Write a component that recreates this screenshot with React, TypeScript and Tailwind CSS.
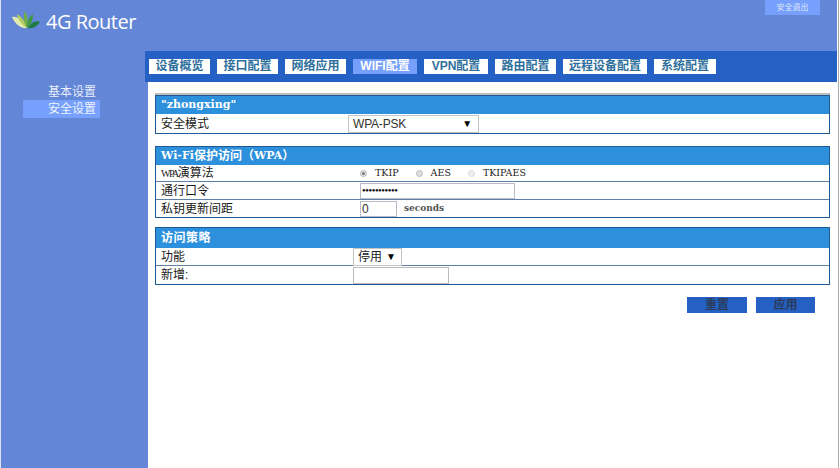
const cjk = "font-['Liberation_Sans','Noto_Sans_CJK_SC',sans-serif]";
const serif = "font-['DejaVu_Serif','Noto_Sans_CJK_SC',serif]";

const tabs = [
  { label: "设备概览", w: "w-[61px]" },
  { label: "接口配置", w: "w-[61px]" },
  { label: "网络应用", w: "w-[61px]" },
  { label: "WIFI配置", w: "w-[64px]", active: true },
  { label: "VPN配置", w: "w-[64px]" },
  { label: "路由配置", w: "w-[61px]" },
  { label: "远程设备配置", w: "w-[84px]" },
  { label: "系统配置", w: "w-[62px]" },
];

const Logo = () => (
  <svg width="28" height="18" viewBox="0 0 28 18" className="shrink-0">
    <path d="M0 6 C5 5 11 9 15 17 C9 18 3 13 0 6Z" fill="#e3ebb0" />
    <path d="M5 3 C9 5 13 10 15 17 C10 14 6 9 5 3Z" fill="#b4cd5c" />
    <path d="M13 0 C16 5 16 11 15 17 C12 12 11 6 13 0Z" fill="#6fae42" />
    <path d="M21 3 C21 9 19 14 15 17 C15 11 17 6 21 3Z" fill="#3f9a3a" />
    <path d="M28 11 C24 9 19 12 16 17 C21 18 25 15 28 11Z" fill="#1f7a45" />
  </svg>
);

const PanelHead = ({ children, h }: { children: React.ReactNode; h: string }) => (
  <div className={`${h} bg-[#2d90dc] flex items-center pl-[5px] text-[12px] font-bold text-white ${serif}`}>
    {children}
  </div>
);

const Row = ({ label, labelW, h, children, last }: { label: React.ReactNode; labelW: string; h: string; children?: React.ReactNode; last?: boolean }) => (
  <div className={`${h} flex items-center pl-[5px] ${last ? "" : "border-b border-[#5f80a8]"}`}>
    <div className={`${labelW} shrink-0 text-[12px] text-[#1a1a1a] ${cjk}`}>{label}</div>
    {children}
  </div>
);

const Radio = ({ label, shade, dot }: { label: string; shade: string; dot: string }) => (
  <div className="flex items-center">
    <span className={`w-[7px] h-[7px] rounded-full border ${shade} flex items-center justify-center`}>
      <span className={`w-[3px] h-[3px] rounded-full ${dot}`} />
    </span>
    <span className={`ml-[8px] text-[9.5px] text-[#222] ${serif}`}>{label}</span>
  </div>
);

const App = () => {
  return (
    <div className={`w-[840px] h-[468px] overflow-hidden flex bg-white ${cjk}`}>
      <div className="w-[1px] bg-[#dbe3f5] shrink-0" />
      <div className="w-[836px] shrink-0 flex flex-col bg-[#6386d6]">
        <div className="h-[51px] flex justify-between shrink-0">
          <div className="flex items-start pl-[11px] pt-[11px] gap-[6px]">
            <Logo />
            <span className="text-[20px] leading-[21px] text-white font-['Open_Sans',sans-serif] tracking-[-0.5px]">4G Router</span>
          </div>
          <div className="w-[55px] h-[15px] mr-[17px] bg-[#76a0fb] flex items-center justify-center text-[8px] text-[#dfe8fb]">
            安全退出
          </div>
        </div>

        <div className="flex-1 flex">
          <div className="w-[144px] shrink-0 pl-[22px] pt-[33px]">
            <div className="w-[77px] h-[16px] flex items-center pl-[25px] text-[12px] whitespace-nowrap text-[#e8eefb]">基本设置</div>
            <div className="w-[77px] h-[18px] flex items-center pl-[25px] text-[12px] whitespace-nowrap text-[#eef3fd] bg-[#76a0fb]">安全设置</div>
          </div>

          <div className="flex-1 flex flex-col">
            <div className="h-[31px] bg-[#2561c4] flex items-center pl-[4px] pb-[1px] gap-[7px] shrink-0">
              {tabs.map((t) => (
                <div
                  key={t.label}
                  className={`${t.w} h-[15px] flex items-center justify-center text-[12px] font-bold ${
                    t.active ? "bg-[#76a0fb] text-white" : "bg-white text-[#2f6f9c]"
                  }`}
                >
                  {t.label}
                </div>
              ))}
            </div>

            <div className="flex-1 ml-[3px] bg-white pl-[7px] pr-[7px] pt-[11px] flex flex-col">
              <div className="h-[3px] bg-[#bdbdbd] -mb-[1px]" />

              <div className="border border-[#1f5a96] h-[39px]">
                <PanelHead h="h-[18px]"><span className="text-[11px]">"zhongxing"</span></PanelHead>
                <Row label="安全模式" labelW="w-[187px]" h="h-[19px]" last>
                  <div className="w-[131px] h-[18px] border border-[#c4c4c4] flex items-center justify-between pl-[4px] pr-[6px] text-[12px] tracking-[-0.2px] text-[#333]">
                    <span>WPA-PSK</span>
                    <span className="text-[10px] text-black">▼</span>
                  </div>
                </Row>
              </div>

              <div className="mt-[12px] border border-[#1f5a96]">
                <PanelHead h="h-[18px]">
                  <span className="text-[11px]">Wi-Fi</span>
                  <span>保护访问（</span>
                  <span className="text-[11px]">WPA</span>
                  <span>）</span>
                </PanelHead>
                <Row
                  label={
                    <>
                      <span className="font-['Liberation_Serif',serif] text-[10px] tracking-[-1.5px]">WPA</span>演算法
                    </>
                  }
                  labelW="w-[199px]"
                  h="h-[17px]"
                >
                  <div className="flex items-center gap-[17px]">
                    <Radio label="TKIP" shade="border-[#b5b5b5] bg-[#e8e8e8]" dot="bg-[#777]" />
                    <Radio label="AES" shade="border-[#bbb] bg-[#ddd]" dot="bg-transparent" />
                    <Radio label="TKIPAES" shade="border-[#ddd] bg-[#eee]" dot="bg-transparent" />
                  </div>
                </Row>
                <Row label="通行口令" labelW="w-[199px]" h="h-[18px]">
                  <div className="w-[155px] h-[16px] border border-[#bbbbc8] flex items-center pl-[1px] text-[6px] tracking-[-0.4px] text-[#111]">
                    ●●●●●●●●●●●
                  </div>
                </Row>
                <Row label="私钥更新间距" labelW="w-[199px]" h="h-[17px]" last>
                  <div className="w-[37px] h-[16px] border border-[#bbbbc8] flex items-center pl-[1px] text-[12px] text-[#333]">0</div>
                  <span className={`ml-[7px] text-[9px] font-bold text-[#555] ${serif}`}>seconds</span>
                </Row>
              </div>

              <div className="mt-[9px] border border-[#1f5a96]">
                <PanelHead h="h-[20px]"><span className="tracking-[0.5px]">访问策略</span></PanelHead>
                <Row label="功能" labelW="w-[192px]" h="h-[18px]">
                  <div className="w-[49px] h-[18px] border border-[#c4c4c4] flex items-center justify-between pl-[4px] pr-[5px] text-[12px] text-[#222]">
                    <span>停用</span>
                    <span className="text-[10px] text-black">▼</span>
                  </div>
                </Row>
                <Row label="新增:" labelW="w-[192px]" h="h-[18px]" last>
                  <div className="w-[96px] h-[17px] border border-[#bbbbbb]" />
                </Row>
              </div>

              <div className="mt-[12px] flex justify-end gap-[9px] pr-[15px]">
                <div className="w-[60px] h-[16px] bg-[#2561c4] flex items-center justify-center text-[12px] font-bold text-[#2a3a5a]">重置</div>
                <div className="w-[59px] h-[16px] bg-[#2561c4] flex items-center justify-center text-[12px] font-bold text-[#2a3a5a]">应用</div>
              </div>
            </div>
          </div>
        </div>
      </div>
      <div className="w-[1px] bg-white shrink-0" />
      <div className="w-[1px] bg-[#aaaaaa] shrink-0" />
    </div>
  );
};

export default App;
